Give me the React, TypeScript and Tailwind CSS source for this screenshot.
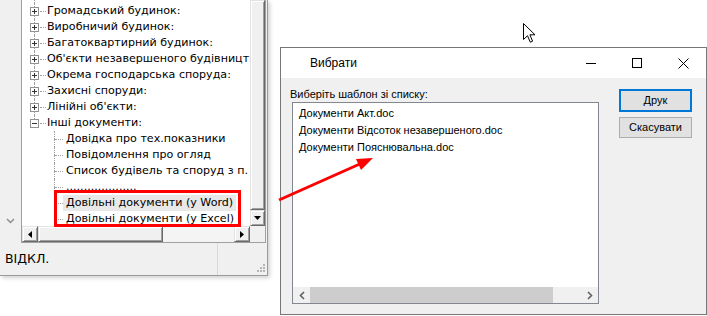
import React from "react";

const tree = "font-['DejaVu_Sans',sans-serif] text-[11.1px] text-black";
const ui = "font-['Liberation_Sans',sans-serif] text-[11px] text-black";

const topNodes = [
  "Житловий будинок:",
  "Громадський будинок:",
  "Виробничий будинок:",
  "Багатоквартирний будинок:",
  "Об'єкти незавершеного будівництва:",
  "Окрема господарська споруда:",
  "Захисні споруди:",
  "Лінійні об'єкти:",
];

const children = [
  "Довідка про тех.показники",
  "Повідомлення про огляд",
  "Список будівель та споруд з п.",
  "....................",
  "Довільні документи (у Word)",
  "Довільні документи (у Excel)",
];

const templates = [
  "Документи Акт.doc",
  "Документи Відсоток незавершеного.doc",
  "Документи Пояснювальна.doc",
];

function ExpandBox({ open, last }: { open?: boolean; last?: boolean }) {
  return (
    <div className="flex h-4 w-[9px] shrink-0 flex-col">
      <div className="ml-[4px] h-[4px] border-l border-dotted border-[#a0a0a0]" />
      <div className="relative flex h-[9px] w-[9px] items-center justify-center border border-[#919191] bg-white">
        <div className="h-px w-[5px] bg-[#333]" />
        {!open && <div className="absolute h-[5px] w-px bg-[#333]" />}
      </div>
      {!last && <div className="ml-[4px] h-[3px] border-l border-dotted border-[#a0a0a0]" />}
    </div>
  );
}

function TopNode({ label, open, last }: { label: string; open?: boolean; last?: boolean }) {
  return (
    <div className="flex h-4 items-center whitespace-nowrap pl-[8px]">
      <ExpandBox open={open} last={last} />
      <div className="ml-px w-[6px] shrink-0 border-t border-dotted border-[#a0a0a0]" />
      <span className="ml-px shrink-0">{label}</span>
    </div>
  );
}

function ChildNode({ label, last, selected }: { label: string; last?: boolean; selected?: boolean }) {
  return (
    <div className="flex h-4 items-stretch whitespace-nowrap pl-[32px]">
      <div className="flex w-px shrink-0 flex-col">
        <div className="h-[8px] border-l border-dotted border-[#a0a0a0]" />
        {!last && <div className="flex-1 border-l border-dotted border-[#a0a0a0]" />}
      </div>
      <div className="mt-[8px] h-0 w-[8px] shrink-0 border-t border-dotted border-[#a0a0a0]" />
      <span className={`flex shrink-0 items-center px-[3px] ${selected ? "bg-[#e8e8e8]" : ""}`}>{label}</span>
    </div>
  );
}

function Btn3D({ children, className = "" }: { children?: React.ReactNode; className?: string }) {
  return (
    <div
      className={`flex items-center justify-center border border-b-[#696969] border-l-[#e3e3e3] border-r-[#696969] border-t-[#e3e3e3] bg-[#f0f0f0] shadow-[inset_1px_1px_0_#fff,inset_-1px_-1px_0_#a0a0a0] ${className}`}
    >
      {children}
    </div>
  );
}

function Tri({ dir }: { dir: "down" | "left" | "right" }) {
  const pts = dir === "down" ? "0,0 7,0 3.5,4" : dir === "left" ? "4,0 4,7 0,3.5" : "0,0 0,7 4,3.5";
  return (
    <svg width={dir === "down" ? 7 : 4} height={dir === "down" ? 4 : 7}>
      <polygon points={pts} fill="#000" />
    </svg>
  );
}

function LeftWindow() {
  return (
    <div className="absolute left-0 top-0 flex h-[276px] w-[268px] flex-col border-b border-r border-[#9a9a9a] bg-[#f0f0f0] shadow-[2px_2px_4px_rgba(0,0,0,0.18)]">
      <div className="flex h-[243px]">
        <div className="flex w-[21px] flex-col justify-end pb-[19px] pl-[6px]">
          <svg width="9" height="6" viewBox="0 0 9 6">
            <path d="M1 1 L4.5 4.5 L8 1" stroke="#8a8a8a" strokeWidth="1.4" fill="none" />
          </svg>
        </div>
        <div className="flex w-[245px] flex-col border-b border-l border-r border-[#a0a0a0]">
          <div className="flex flex-1 overflow-hidden">
            <div className={`w-[228px] overflow-hidden bg-white ${tree}`}>
              <div className="-mt-[13px] w-[260px]">
                {topNodes.map((n) => (
                  <TopNode key={n} label={n} />
                ))}
                <TopNode label="Інші документи:" open last />
                {children.map((c, i) => (
                  <ChildNode key={c} label={c} last={i === children.length - 1} selected={i === 4} />
                ))}
              </div>
            </div>
            <div className="flex w-[15px] flex-col bg-[#f0f0f0]">
              <Btn3D className="flex-1" />
              <Btn3D className="h-[16px]">
                <Tri dir="down" />
              </Btn3D>
            </div>
          </div>
          <div className="flex h-[16px]">
            <Btn3D className="w-[16px]">
              <Tri dir="left" />
            </Btn3D>
            <Btn3D className="w-[125px]" />
            <div className="flex-1 bg-[#f4f4f4]" />
            <Btn3D className="w-[16px]">
              <Tri dir="right" />
            </Btn3D>
            <div className="w-[15px] bg-[#f0f0f0]" />
          </div>
        </div>
      </div>
      <div className="flex flex-1 items-center">
        <div className="flex w-[218px] items-center self-stretch border-r border-[#d9d9d9] pl-[5px] font-['DejaVu_Sans',sans-serif] text-[12.5px] text-black">
          ВІДКЛ.
        </div>
        <div className="flex flex-1 items-end justify-end self-stretch pb-[3px] pr-[2px]">
          <svg width="10" height="10" viewBox="0 0 10 10">
            {[
              [8, 2],
              [5, 5],
              [8, 5],
              [2, 8],
              [5, 8],
              [8, 8],
            ].map(([x, y]) => (
              <rect key={`${x}-${y}`} x={x} y={y} width="2" height="2" fill="#b5b5b5" />
            ))}
          </svg>
        </div>
      </div>
    </div>
  );
}

function Dialog() {
  return (
    <div className={`absolute left-[280px] top-[47px] flex h-[268px] w-[427px] flex-col border border-[#777] bg-[#f0f0f0] ${ui}`}>
      <div className="flex h-[30px] items-center bg-white text-[12px]">
        <span className="flex-1 pl-[29px]">Вибрати</span>
        <div className="flex h-full">
          <div className="flex w-[46px] items-center justify-center">
            <div className="h-px w-[10px] bg-black" />
          </div>
          <div className="flex w-[46px] items-center justify-center">
            <div className="h-[10px] w-[10px] border border-black" />
          </div>
          <div className="flex w-[46px] items-center justify-center">
            <svg width="11" height="11" viewBox="0 0 11 11">
              <path d="M0.5 0.5 L10.5 10.5 M10.5 0.5 L0.5 10.5" stroke="#000" strokeWidth="1" />
            </svg>
          </div>
        </div>
      </div>
      <div className="flex flex-1">
        <div className="flex flex-col pl-[9px] pt-[9px]">
          <div className="h-[15px] leading-[15px]">Виберіть шаблон зі списку:</div>
          <div className="ml-[2px] flex h-[202px] w-[307px] flex-col border border-[#828790] bg-white">
            <div className="flex-1 pl-[6px] pt-[2px]">
              {templates.map((t) => (
                <div key={t} className="h-[17px] leading-[17px]">
                  {t}
                </div>
              ))}
            </div>
            <div className="flex h-[16px] items-center bg-[#f0f0f0]">
              <div className="flex w-[17px] items-center justify-center">
                <svg width="6" height="9" viewBox="0 0 6 9">
                  <path d="M5 1 L1.5 4.5 L5 8" stroke="#606060" strokeWidth="1.6" fill="none" />
                </svg>
              </div>
              <div className="h-full w-[243px] bg-[#cdcdcd]" />
              <div className="flex-1" />
              <div className="flex w-[17px] items-center justify-center">
                <svg width="6" height="9" viewBox="0 0 6 9">
                  <path d="M1 1 L4.5 4.5 L1 8" stroke="#606060" strokeWidth="1.6" fill="none" />
                </svg>
              </div>
            </div>
          </div>
        </div>
        <div className="ml-[20px] flex flex-col gap-[5px] pt-[11px]">
          <div className="flex h-[23px] w-[73px] items-center justify-center border-2 border-[#0078d7] bg-[#e1e1e1]">
            Друк
          </div>
          <div className="flex h-[21px] w-[73px] items-center justify-center border border-[#adadad] bg-[#e1e1e1]">
            Скасувати
          </div>
        </div>
      </div>
    </div>
  );
}

export default function App() {
  return (
    <div className="relative h-[316px] w-[707px] overflow-hidden bg-white">
      <LeftWindow />
      <Dialog />

      {/* red highlight round the two tree items */}
      <div className="absolute left-[54px] top-[190px] h-[37px] w-[187px] border-[3px] border-[#ff0000]" />

      {/* red arrow */}
      <svg className="absolute left-0 top-0" width="707" height="316">
        <line x1="279" y1="200" x2="362" y2="163" stroke="#ff0000" strokeWidth="3" />
        <polygon points="373,158 356,159 361,170" fill="#ff0000" />
      </svg>

      {/* mouse cursor */}
      <svg className="absolute left-[523px] top-[23px]" width="13" height="21" viewBox="0 0 13 21">
        <path
          d="M0.5 0.5 L0.5 16.5 L4.5 12.7 L7.3 19.2 L9.6 18.2 L6.9 11.8 L12 11.8 Z"
          fill="#fff"
          stroke="#000"
          strokeWidth="1"
          strokeLinejoin="round"
        />
      </svg>
    </div>
  );
}
